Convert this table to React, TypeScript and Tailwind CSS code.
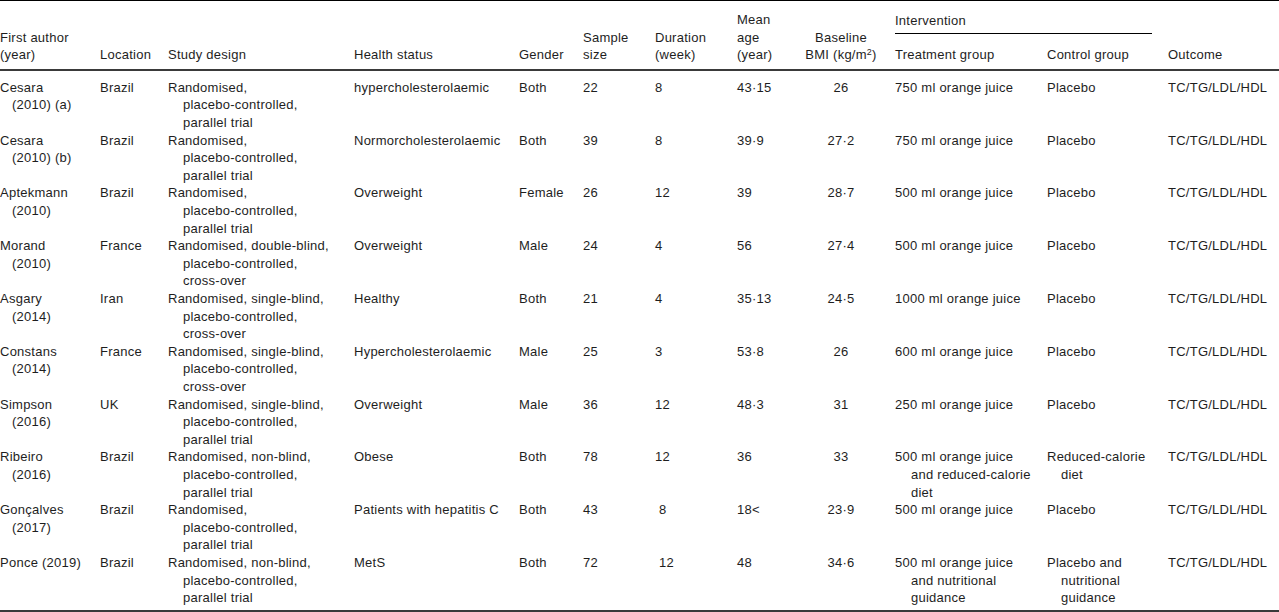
type Cell = string | string[];

interface Study {
  author: Cell;
  location: string;
  design: string[];
  health: string;
  gender: string;
  sample: string;
  duration: string;
  age: string;
  bmi: string;
  treatment: Cell;
  control: Cell;
  outcome: string;
  nudge?: boolean;
}

const rows: Study[] = [
  {
    author: ["Cesara", "(2010) (a)"],
    location: "Brazil",
    design: ["Randomised,", "placebo-controlled,", "parallel trial"],
    health: "hypercholesterolaemic",
    gender: "Both",
    sample: "22",
    duration: "8",
    age: "43·15",
    bmi: "26",
    treatment: "750 ml orange juice",
    control: "Placebo",
    outcome: "TC/TG/LDL/HDL",
  },
  {
    author: ["Cesara", "(2010) (b)"],
    location: "Brazil",
    design: ["Randomised,", "placebo-controlled,", "parallel trial"],
    health: "Normorcholesterolaemic",
    gender: "Both",
    sample: "39",
    duration: "8",
    age: "39·9",
    bmi: "27·2",
    treatment: "750 ml orange juice",
    control: "Placebo",
    outcome: "TC/TG/LDL/HDL",
  },
  {
    author: ["Aptekmann", "(2010)"],
    location: "Brazil",
    design: ["Randomised,", "placebo-controlled,", "parallel trial"],
    health: "Overweight",
    gender: "Female",
    sample: "26",
    duration: "12",
    age: "39",
    bmi: "28·7",
    treatment: "500 ml orange juice",
    control: "Placebo",
    outcome: "TC/TG/LDL/HDL",
  },
  {
    author: ["Morand", "(2010)"],
    location: "France",
    design: ["Randomised, double-blind,", "placebo-controlled,", "cross-over"],
    health: "Overweight",
    gender: "Male",
    sample: "24",
    duration: "4",
    age: "56",
    bmi: "27·4",
    treatment: "500 ml orange juice",
    control: "Placebo",
    outcome: "TC/TG/LDL/HDL",
  },
  {
    author: ["Asgary", "(2014)"],
    location: "Iran",
    design: ["Randomised, single-blind,", "placebo-controlled,", "cross-over"],
    health: "Healthy",
    gender: "Both",
    sample: "21",
    duration: "4",
    age: "35·13",
    bmi: "24·5",
    treatment: "1000 ml orange juice",
    control: "Placebo",
    outcome: "TC/TG/LDL/HDL",
  },
  {
    author: ["Constans", "(2014)"],
    location: "France",
    design: ["Randomised, single-blind,", "placebo-controlled,", "cross-over"],
    health: "Hypercholesterolaemic",
    gender: "Male",
    sample: "25",
    duration: "3",
    age: "53·8",
    bmi: "26",
    treatment: "600 ml orange juice",
    control: "Placebo",
    outcome: "TC/TG/LDL/HDL",
  },
  {
    author: ["Simpson", "(2016)"],
    location: "UK",
    design: ["Randomised, single-blind,", "placebo-controlled,", "parallel trial"],
    health: "Overweight",
    gender: "Male",
    sample: "36",
    duration: "12",
    age: "48·3",
    bmi: "31",
    treatment: "250 ml orange juice",
    control: "Placebo",
    outcome: "TC/TG/LDL/HDL",
  },
  {
    author: ["Ribeiro", "(2016)"],
    location: "Brazil",
    design: ["Randomised, non-blind,", "placebo-controlled,", "parallel trial"],
    health: "Obese",
    gender: "Both",
    sample: "78",
    duration: "12",
    age: "36",
    bmi: "33",
    treatment: ["500 ml orange juice", "and reduced-calorie", "diet"],
    control: ["Reduced-calorie", "diet"],
    outcome: "TC/TG/LDL/HDL",
  },
  {
    author: ["Gonçalves", "(2017)"],
    location: "Brazil",
    design: ["Randomised,", "placebo-controlled,", "parallel trial"],
    health: "Patients with hepatitis C",
    gender: "Both",
    sample: "43",
    duration: "8",
    age: "18<",
    bmi: "23·9",
    treatment: "500 ml orange juice",
    control: "Placebo",
    outcome: "TC/TG/LDL/HDL",
    nudge: true,
  },
  {
    author: "Ponce (2019)",
    location: "Brazil",
    design: ["Randomised, non-blind,", "placebo-controlled,", "parallel trial"],
    health: "MetS",
    gender: "Both",
    sample: "72",
    duration: "12",
    age: "48",
    bmi: "34·6",
    treatment: ["500 ml orange juice", "and nutritional", "guidance"],
    control: ["Placebo and", "nutritional", "guidance"],
    outcome: "TC/TG/LDL/HDL",
    nudge: true,
  },
];

const cols =
  "grid grid-cols-[100px_68px_186px_165px_64px_72px_82px_60px_98px_152px_121px_111px]";

function Lines({ value, indent = "pl-[14px]" }: { value: Cell; indent?: string }) {
  const lines = Array.isArray(value) ? value : [value];
  return (
    <div>
      {lines.map((line, i) => (
        <div key={i} className={`whitespace-nowrap ${i > 0 ? indent : ""}`}>
          {line}
        </div>
      ))}
    </div>
  );
}

export default function App() {
  return (
    <div
      className="w-[1279px] h-[612px] bg-white text-[#1e1e1e] text-[13px] tracking-[0.25px] leading-[17.6px]"
      style={{ fontFamily: '"Liberation Sans", Arial, Helvetica, sans-serif' }}
    >
      <div className="border-t border-black" />

      {/* header */}
      <div className={`${cols} pt-[10px] pb-[5px] border-b-2 border-[#3a3a3a]`}>
        <div className="flex flex-col justify-end">
          <div>First author</div>
          <div>(year)</div>
        </div>
        <div className="flex flex-col justify-end">Location</div>
        <div className="flex flex-col justify-end">Study design</div>
        <div className="flex flex-col justify-end">Health status</div>
        <div className="flex flex-col justify-end">Gender</div>
        <div className="flex flex-col justify-end">
          <div>Sample</div>
          <div>size</div>
        </div>
        <div className="flex flex-col justify-end">
          <div>Duration</div>
          <div>(week)</div>
        </div>
        <div className="flex flex-col justify-end">
          <div>Mean</div>
          <div>age</div>
          <div>(year)</div>
        </div>
        <div className="flex flex-col justify-end items-center pr-[10px]">
          <div>Baseline</div>
          <div className="whitespace-nowrap">
            BMI (kg/m<sup className="text-[9px] leading-none">2</sup>)
          </div>
        </div>
        <div className="col-span-2 flex flex-col justify-end">
          <div>Intervention</div>
          <div className="w-[257px] h-px bg-black mt-[4px] mb-[12px]" />
          <div className="grid grid-cols-[152px_121px]">
            <div>Treatment group</div>
            <div>Control group</div>
          </div>
        </div>
        <div className="flex flex-col justify-end">Outcome</div>
      </div>

      {/* body */}
      <div className="pt-[8px] pb-[3px] border-b-2 border-[#3a3a3a]">
        {rows.map((r, i) => (
          <div key={i} className={`${cols} h-[52.8px]`}>
            <Lines value={r.author} indent="pl-[12px]" />
            <div>{r.location}</div>
            <Lines value={r.design} indent="pl-[15px]" />
            <div>{r.health}</div>
            <div>{r.gender}</div>
            <div>{r.sample}</div>
            <div className={r.nudge ? "pl-[4px]" : ""}>{r.duration}</div>
            <div>{r.age}</div>
            <div className="text-center pr-[10px]">{r.bmi}</div>
            <Lines value={r.treatment} indent="pl-[16px]" />
            <Lines value={r.control} indent="pl-[14px]" />
            <div>{r.outcome}</div>
          </div>
        ))}
      </div>
    </div>
  );
}
